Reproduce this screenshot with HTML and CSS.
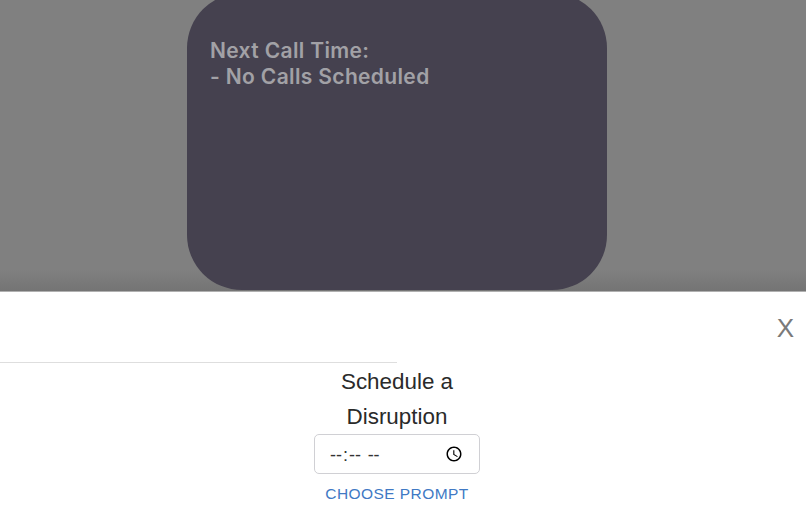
FILE: index.html
```html
<!DOCTYPE html>
<html lang="en">
<head>
<meta charset="utf-8">
<title>Schedule a Disruption</title>
<link rel="stylesheet" href="styles.css">
</head>
<body>
<div class="backdrop">
  <div class="card">
    <p class="call-text">Next Call Time:<br>- No Calls Scheduled</p>
  </div>
</div>
<section class="sheet">
  <div class="sheet-head"><button class="close" type="button">X</button></div>
  <div class="divider"></div>
  <div class="form">
    <h2 class="title">Schedule a<br>Disruption</h2>
    <input class="time" type="time" aria-label="Time">
    <button class="prompt" type="button">CHOOSE PROMPT</button>
  </div>
</section>
</body>
</html>
```
FILE: styles.css
```css
* { box-sizing: border-box; }
html, body { margin: 0; padding: 0; height: 100%; }
body {
  width: 806px;
  height: 509px;
  overflow: hidden;
  background: #fff;
  font-family: "Liberation Sans", Arial, sans-serif;
}
.backdrop {
  height: 292px;
  padding: 0 12px 1px 0;
  background: linear-gradient(#808080 0, #808080 270px, #747474 291px);
  border-bottom: 1px solid #b0b0b0;
  display: flex;
  justify-content: center;
  align-items: flex-end;
  overflow: hidden;
}
.card {
  flex: none;
  width: 420px;
  height: 297px;
  border-radius: 55px;
  background: #45414f;
  padding: 45px 22px 0 23px;
}
.call-text {
  margin: 0;
  font-family: Inter, Roboto, sans-serif;
  font-size: 21px;
  font-weight: 600;
  line-height: 26px;
  letter-spacing: 0.35px;
  color: #a2a1a6;
}
.sheet { background: #fff; }
.sheet-head {
  height: 70px;
  display: flex;
  justify-content: flex-end;
  align-items: flex-start;
}
.close {
  margin: 21px 12px 0 0;
  padding: 0;
  border: 0;
  background: none;
  font-family: "Liberation Sans", Arial, sans-serif;
  font-size: 26px;
  line-height: 30px;
  color: #7a7a7a;
}
.divider {
  width: 397px;
  height: 1px;
  background: #dedede;
}
.form {
  width: 166px;
  margin-left: 314px;
  display: flex;
  flex-direction: column;
  align-items: center;
}
.title {
  margin: 1px 0 0;
  font-size: 22.4px;
  font-weight: 400;
  line-height: 35px;
  text-align: center;
  color: #2a2a2a;
}
.time {
  width: 166px;
  height: 40px;
  padding: 0 12px 0 14px;
  border: 1px solid #d0d0d4;
  border-radius: 5px;
  background: #fff;
  font-family: "Liberation Sans", Arial, sans-serif;
  font-size: 18px;
  color: #333;
}
.time::-webkit-datetime-edit {
  padding-top: 2px;
}
.time::-webkit-datetime-edit-hour-field,
.time::-webkit-datetime-edit-minute-field,
.time::-webkit-datetime-edit-ampm-field {
  letter-spacing: 1px;
}
.time::-webkit-datetime-edit-ampm-field {
  margin-left: 1px;
}
.prompt {
  margin-top: 10px;
  padding: 0;
  border: 0;
  background: none;
  font-family: "Liberation Sans", Arial, sans-serif;
  font-size: 15.5px;
  line-height: 20px;
  letter-spacing: 0.43px;
  white-space: nowrap;
  color: #4079c4;
}
```
